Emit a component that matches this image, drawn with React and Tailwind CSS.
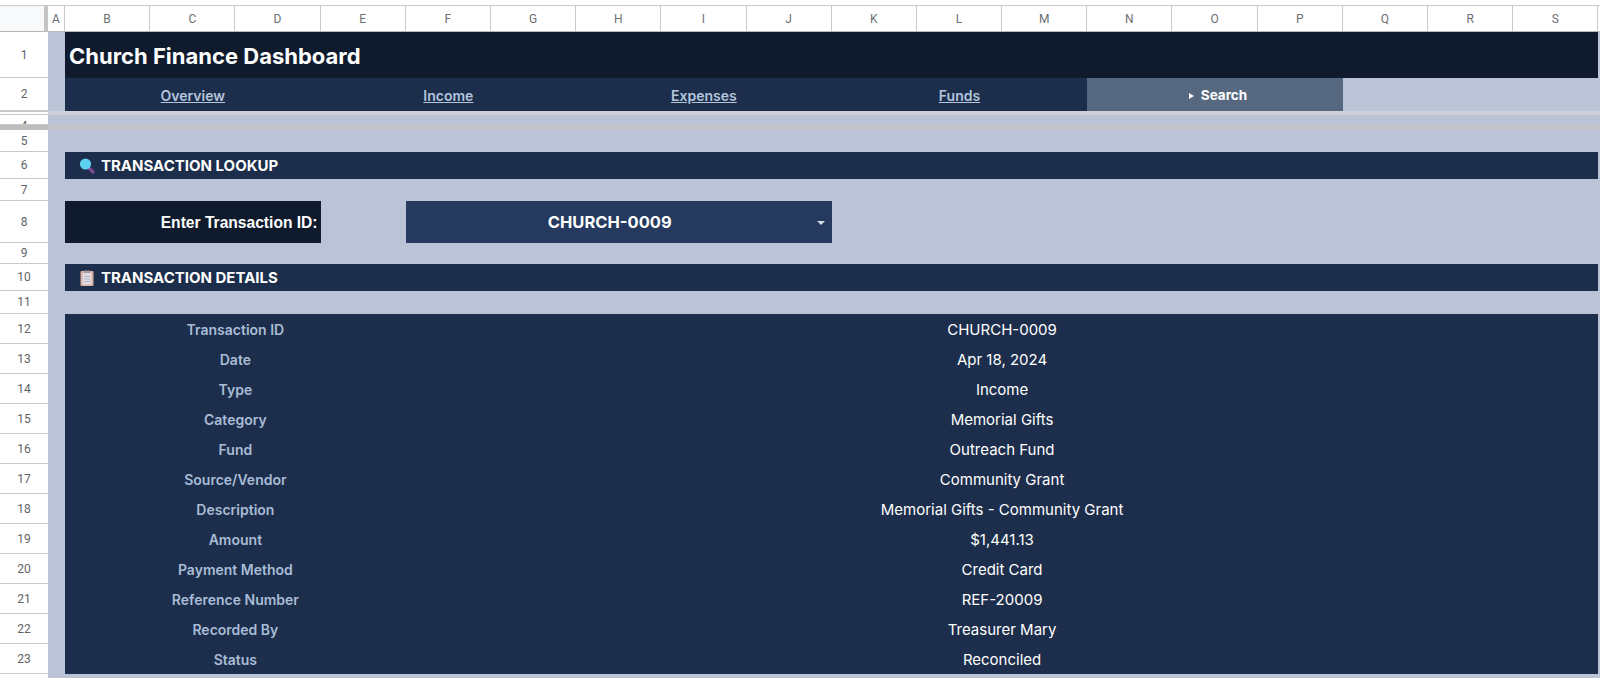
import React from "react";

const columns = ["B", "C", "D", "E", "F", "G", "H", "I", "J", "K", "L", "M", "N", "O", "P", "Q", "R", "S"];

const details = [
  ["Transaction ID", "CHURCH-0009"],
  ["Date", "Apr 18, 2024"],
  ["Type", "Income"],
  ["Category", "Memorial Gifts"],
  ["Fund", "Outreach Fund"],
  ["Source/Vendor", "Community Grant"],
  ["Description", "Memorial Gifts - Community Grant"],
  ["Amount", "$1,441.13"],
  ["Payment Method", "Credit Card"],
  ["Reference Number", "REF-20009"],
  ["Recorded By", "Treasurer Mary"],
  ["Status", "Reconciled"],
];

const sans = "font-['Inter','Noto_Sans',sans-serif]";

// one sheet row: the numbered header on the left, cells on the right
function Row({ num, height, children, numClass = "items-center" }) {
  return (
    <div className={`flex ${height}`}>
      <div className={`w-12 shrink-0 bg-white border-b border-[#c9c9c9] flex justify-center overflow-hidden text-[12px] text-[#5f6368] font-['Roboto',sans-serif] ${numClass}`}>
        {num}
      </div>
      <div className="flex-1 min-w-0 grid grid-cols-[17px_repeat(18,85.2px)] bg-[#bbc4d6]">{children}</div>
    </div>
  );
}

function SearchEmoji() {
  return (
    <svg width="16" height="18" viewBox="0 0 16 18">
      <line x1="10" y1="11" x2="14" y2="15" stroke="#7d4a8f" strokeWidth="3.4" strokeLinecap="round" />
      <circle cx="6.5" cy="7" r="5.6" fill="#5ed0f2" />
    </svg>
  );
}

function ClipboardEmoji() {
  return (
    <svg width="14" height="16" viewBox="0 0 14 16">
      <rect x="0.5" y="1" width="13" height="15" rx="1" fill="#dcb0a0" />
      <rect x="2.5" y="3" width="9" height="11.5" fill="#dfdde3" />
      <rect x="4" y="0.5" width="6" height="2.5" fill="#a89aa0" />
      <path d="M4 6.5h6M4 9h6M4 11.5h6" stroke="#b4b6c4" strokeWidth="1" />
    </svg>
  );
}

function SectionBar({ icon, title }) {
  return (
    <div className={`col-start-2 col-end-20 bg-[#1c2e4b] flex items-center pl-[14px] pt-[1px] gap-[6px] text-white text-[15px] font-bold ${sans}`}>
      <span className="w-4 flex justify-center shrink-0">{icon}</span>
      <span>{title}</span>
    </div>
  );
}

function NavLink({ span, label }) {
  return (
    <div className={`${span} bg-[#1c2e4b] flex items-center justify-center pt-[2px] text-[#b4c5dc] text-[14px] font-semibold underline ${sans}`}>
      {label}
    </div>
  );
}

export default function App() {
  return (
    <div className="w-[1600px] h-[678px] overflow-hidden bg-white">
      <div className="h-[6px] border-b border-[#c9c9c9]" />

      {/* column letters */}
      <div className="flex h-[26px] border-b border-[#b8b8b8] bg-white text-[12px] text-[#6b6f74] font-['Roboto',sans-serif]">
        <div className="w-12 shrink-0 bg-[#f8f9fa] border-r-[4px] border-[#c4c4c4]" />
        <div className="flex-1 grid grid-cols-[17px_repeat(18,85.2px)]">
          <div className="flex items-center justify-center border-r border-[#c9c9c9]">A</div>
          {columns.map((c) => (
            <div key={c} className="flex items-center justify-center border-r border-[#c9c9c9]">
              {c}
            </div>
          ))}
        </div>
      </div>

      <Row num="1" height="h-[46px]">
        <div className="col-start-2 col-end-20 bg-[#0f1b2d] flex items-center pl-1 pt-[2px] text-white text-[22px] font-bold font-['Inter',sans-serif]">
          Church Finance Dashboard
        </div>
      </Row>
      <Row num="2" height="h-[33px]">
        <NavLink span="col-start-2 col-end-5" label="Overview" />
        <NavLink span="col-start-5 col-end-8" label="Income" />
        <NavLink span="col-start-8 col-end-11" label="Expenses" />
        <NavLink span="col-start-11 col-end-14" label="Funds" />
        <div className={`col-start-14 col-end-17 bg-[#56687f] flex items-center justify-center gap-[7px] pl-[6px] pt-[2px] text-white text-[13.5px] font-bold ${sans}`}>
          <span className="w-0 h-0 border-y-[3px] border-y-transparent border-l-[5px] border-l-white" />
          Search
        </div>
      </Row>

      {/* hidden row 3 and squeezed row 4, then the freeze line */}
      <div className="flex h-[4px]">
        <div className="w-12 shrink-0 bg-white border-y border-[#c9c9c9]" />
        <div className="flex-1 bg-[#cdd0d8]" />
      </div>
      <Row num="4" height="h-[10px]" numClass="items-start pt-[2px]" />
      <div className="flex h-[5px]">
        <div className="w-12 shrink-0 bg-[#bdbdbd]" />
        <div className="flex-1 bg-[#c1c3c8]" />
      </div>

      <Row num="5" height="h-[22px]" />
      <Row num="6" height="h-[27px]">
        <SectionBar icon={<SearchEmoji />} title="TRANSACTION LOOKUP" />
      </Row>
      <Row num="7" height="h-[22px]" />
      <Row num="8" height="h-[42px]">
        <div className="col-start-2 col-end-5 bg-[#0f1b2d] flex items-center justify-end pr-[3px] pt-[1px] text-white text-[15.6px] font-bold font-['Liberation_Sans',sans-serif]">
          Enter Transaction ID:
        </div>
        <div className={`col-start-6 col-end-11 bg-[#253a5e] relative flex items-center justify-center pr-[18px] pt-[1px] text-white text-[16.5px] font-bold ${sans}`}>
          CHURCH-0009
          <span className="absolute right-[7px] top-[20px] w-0 h-0 border-x-[4px] border-x-transparent border-t-[4px] border-t-[#d5dcea]" />
        </div>
      </Row>
      <Row num="9" height="h-[21px]" />
      <Row num="10" height="h-[27px]">
        <SectionBar icon={<ClipboardEmoji />} title="TRANSACTION DETAILS" />
      </Row>
      <Row num="11" height="h-[23px]" />

      {details.map(([label, value], i) => (
        <Row key={label} num={i + 12} height="h-[30px]">
          <div className={`col-start-2 col-end-6 bg-[#1c2e4b] flex items-center justify-center pt-[1px] text-[#a9bcd6] text-[14px] font-semibold ${sans}`}>
            {label}
          </div>
          <div className={`col-start-6 col-end-20 bg-[#1c2e4b] flex items-center justify-center pt-[2px] text-white text-[15px] font-normal ${sans}`}>
            {value}
          </div>
        </Row>
      ))}
      <Row num="" height="h-[30px]" />
    </div>
  );
}
